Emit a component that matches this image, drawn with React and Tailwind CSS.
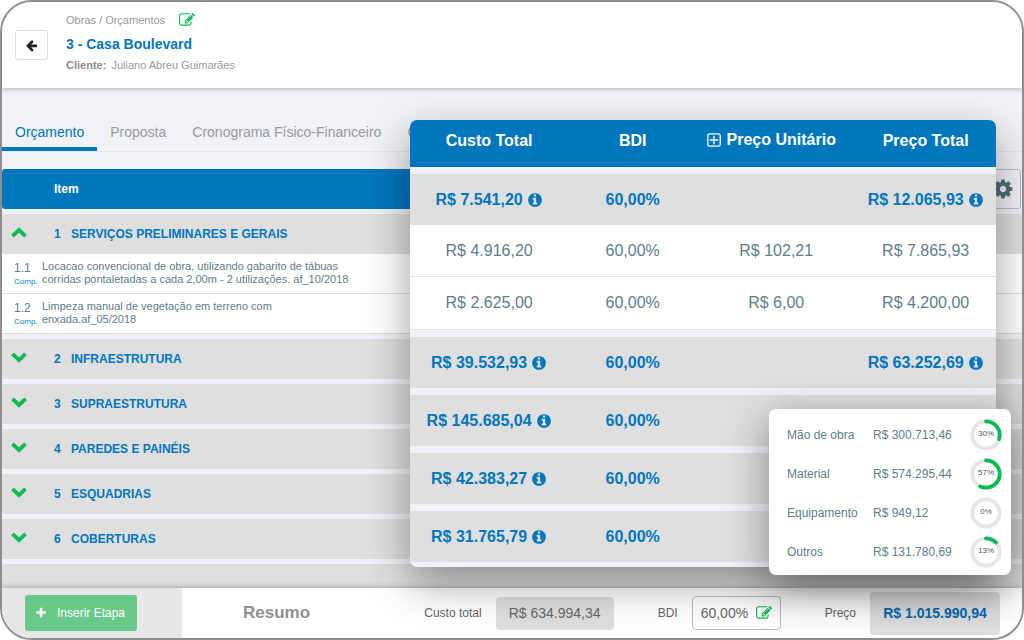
import { useState } from "react";

const TABS = ["Orçamento", "Proposta", "Cronograma Físico-Financeiro", "C"];

const STAGES = [
  {
    id: "1",
    name: "SERVIÇOS PRELIMINARES E GERAIS",
    open: true,
    items: [
      {
        id: "1.1",
        lines: [
          "Locacao convencional de obra, utilizando gabarito de tábuas",
          "corridas pontaletadas a cada 2,00m - 2 utilizações. af_10/2018",
        ],
      },
      {
        id: "1.2",
        lines: ["Limpeza manual de vegetação em terreno com", "enxada.af_05/2018"],
      },
    ],
  },
  { id: "2", name: "INFRAESTRUTURA" },
  { id: "3", name: "SUPRAESTRUTURA" },
  { id: "4", name: "PAREDES E PAINÉIS" },
  { id: "5", name: "ESQUADRIAS" },
  { id: "6", name: "COBERTURAS" },
];

const PRICES = [
  {
    cost: "R$ 7.541,20",
    total: "R$ 12.065,93",
    items: [
      { cost: "R$ 4.916,20", unit: "R$ 102,21", total: "R$ 7.865,93" },
      { cost: "R$ 2.625,00", unit: "R$ 6,00", total: "R$ 4.200,00" },
    ],
  },
  { cost: "R$ 39.532,93", total: "R$ 63.252,69" },
  { cost: "R$ 145.685,04" },
  { cost: "R$ 42.383,27" },
  { cost: "R$ 31.765,79" },
];

const BREAKDOWN = [
  { label: "Mão de obra", value: "R$ 300.713,46", percent: 30 },
  { label: "Material", value: "R$ 574.295,44", percent: 57 },
  { label: "Equipamento", value: "R$ 949,12", percent: 0 },
  { label: "Outros", value: "R$ 131.780,69", percent: 13 },
];

const ICONS = {
  edit: "M888 1184l116-116-152-152-116 116v56h96v96h56zm440-720q-16-16-33 1l-350 350q-17 17-1 33t33-1l350-350q17-17 1-33zm80 594v190q0 119-84.5 203.5t-203.5 84.5h-832q-119 0-203.5-84.5t-84.5-203.5v-832q0-119 84.5-203.5t203.5-84.5h832q63 0 117 25 15 7 18 23 3 17-9 29l-49 49q-14 14-32 8-23-6-45-6h-832q-66 0-113 47t-47 113v832q0 66 47 113t113 47h832q66 0 113-47t47-113v-126q0-13 9-22l64-64q15-15 35-7t20 29zm-96-738l288 288-672 672h-288v-288zm444 132l-92 92-288-288 92-92q28-28 68-28t68 28l152 152q28 28 28 68t-28 68z",
  back: "M1664 896v128q0 53-32.5 90.5t-84.5 37.5h-704l293 294q38 36 38 90t-38 90l-75 76q-37 37-90 37-52 0-91-37l-651-652q-37-37-37-90 0-52 37-91l651-650q38-38 91-38 52 0 90 38l75 74q38 38 38 91t-38 91l-293 293h704q52 0 84.5 37.5t32.5 90.5z",
  gear: "M1152 896q0-106-75-181t-181-75-181 75-75 181 75 181 181 75 181-75 75-181zm512-109v222q0 12-8 23t-20 13l-185 28q-19 54-39 91 35 50 107 138 10 12 10 25t-9 23q-27 37-99 108t-94 71q-12 0-26-9l-138-108q-44 23-91 38-16 136-29 186-7 28-36 28h-222q-14 0-24.5-8.5t-11.5-21.5l-28-184q-49-16-90-37l-141 107q-10 9-25 9-14 0-25-11-126-114-165-168-7-10-7-23 0-12 8-23 15-21 51-66.5t54-70.5q-27-50-41-99l-183-27q-13-2-21-12.5t-8-23.5v-222q0-12 8-23t19-13l186-28q14-46 39-92-40-57-107-138-10-12-10-24 0-10 9-23 26-36 98.5-107.5t94.5-71.5q13 0 26 10l138 107q44-23 91-38 16-136 29-186 7-28 36-28h222q14 0 24.5 8.5t11.5 21.5l28 184q49 16 90 37l142-107q9-9 24-9 13 0 25 10 129 119 165 170 7 8 7 22 0 12-8 23-15 21-51 66.5t-54 70.5q26 50 41 98l183 28q13 2 21 12.5t8 23.5z",
  info: "M1152 1376v-160q0-14-9-23t-23-9h-96v-512q0-14-9-23t-23-9h-320q-14 0-23 9t-9 23v160q0 14 9 23t23 9h96v320h-96q-14 0-23 9t-9 23v160q0 14 9 23t23 9h448q14 0 23-9t9-23zm-128-896v-160q0-14-9-23t-23-9h-192q-14 0-23 9t-9 23v160q0 14 9 23t23 9h192q14 0 23-9t9-23zm640 416q0 209-103 385.5t-279.5 279.5-385.5 103-385.5-103-279.5-279.5-103-385.5 103-385.5 279.5-279.5 385.5-103 385.5 103 279.5 279.5 103 385.5z",
  plus: "M1600 736v192q0 40-28 68t-68 28h-416v416q0 40-28 68t-68 28h-192q-40 0-68-28t-28-68v-416h-416q-40 0-68-28t-28-68v-192q0-40 28-68t68-28h416v-416q0-40 28-68t68-28h192q40 0 68 28t28 68v416h416q40 0 68 28t28 68z",
};

function Icon({ name, className }) {
  return (
    <svg viewBox="0 0 1792 1792" className={`shrink-0 fill-current ${className}`} aria-hidden="true">
      <path d={ICONS[name]} />
    </svg>
  );
}

function Chevron({ up }) {
  return (
    <svg viewBox="0 0 16 11" className="h-[11px] w-4" fill="none" stroke="#0aba52" strokeWidth="3.8" aria-hidden="true">
      <path d={up ? "M1.5 9.2 8 2.9 14.5 9.2" : "M1.5 1.8 8 8.1 14.5 1.8"} />
    </svg>
  );
}

function PlusSquare() {
  return (
    <svg viewBox="0 0 14 14" className="h-3.5 w-3.5" fill="none" stroke="currentColor" strokeWidth="1.3" aria-hidden="true">
      <rect x="0.8" y="0.8" width="12.4" height="12.4" rx="1.8" />
      <path d="M7 2.8v8.4M2.8 7h8.4" />
    </svg>
  );
}

function Ring({ percent }) {
  return (
    <div className="relative h-8 w-8">
      <svg viewBox="0 0 32 32" className="h-8 w-8 -rotate-90" fill="none" strokeWidth="3.8" aria-hidden="true">
        <circle cx="16" cy="16" r="13.7" stroke="#e6e6e6" />
        {percent > 0 && (
          <circle
            cx="16"
            cy="16"
            r="13.7"
            stroke="#0aba52"
            strokeLinecap="round"
            pathLength="100"
            strokeDasharray={`${percent} 100`}
          />
        )}
      </svg>
      <span className="absolute inset-0 flex items-center justify-center text-[8px] text-[#555]">{percent}%</span>
    </div>
  );
}

function Header() {
  return (
    <header className="z-10 flex h-[86px] shrink-0 items-center bg-white pb-[5px] pl-[13px] shadow-[0_1px_5px_rgba(0,0,0,0.28)]">
      <button
        type="button"
        aria-label="Voltar"
        className="mt-[5px] flex h-[30px] w-[33px] items-center justify-center rounded-[3px] border border-[#dedede] text-[#222]"
      >
        <Icon name="back" className="h-[13px] w-[13px]" />
      </button>
      <div className="ml-[18px]">
        <div className="flex h-5 items-center gap-3.5 text-[11px] text-[#999]">
          <nav>
            <a href="#obras">Obras</a> / <a href="#orcamentos">Orçamentos</a>
          </nav>
          <button type="button" aria-label="Editar obra" className="text-[#0aba52]">
            <Icon name="edit" className="h-4 w-4" />
          </button>
        </div>
        <h1 className="mt-1 text-sm leading-5 font-bold text-[#0076bd]">3 - Casa Boulevard</h1>
        <p className="mt-px text-[11px] leading-5 text-[#999]">
          <b className="mr-0.5 text-[#8c8c8c]">Cliente:</b> Juliano Abreu Guimarães
        </p>
      </div>
    </header>
  );
}

function Tabs() {
  const [active, setActive] = useState(TABS[0]);

  return (
    <nav className="mt-6 flex h-10 shrink-0 border-b border-[#e6e7ec] text-sm text-[#999]">
      {TABS.map((tab) => (
        <button
          key={tab}
          type="button"
          onClick={() => setActive(tab)}
          className={`border-b-4 px-[13px] pt-1 ${
            tab === active ? "border-[#0076bd] text-[#0076bd]" : "border-transparent"
          }`}
        >
          {tab}
        </button>
      ))}
    </nav>
  );
}

function StageRow({ stage, onToggle }) {
  return (
    <tr>
      <td className="pt-[5px]">
        <div className="flex h-10 items-center rounded-l-[3px] bg-[#dfdfdf] pl-[9px] text-xs font-bold text-[#0076bd]">
          <button type="button" aria-label={`Alternar etapa ${stage.id}`} onClick={onToggle} className="w-[43px] pb-1">
            <Chevron up={stage.open} />
          </button>
          <span className="w-[17px]">{stage.id}</span>
          <span>{stage.name}</span>
        </div>
      </td>
    </tr>
  );
}

function ItemRow({ item }) {
  return (
    <tr>
      <td className="h-10 border-b border-[#dcdcdc] bg-white">
        <div className="flex pl-3 text-[11px] leading-[13px] text-[#607d8b]">
          <div className="w-7 shrink-0">
            <div className="text-xs leading-4">{item.id}</div>
            <div className="text-[8px] leading-3 text-[#0088cc]">Comp.</div>
          </div>
          <p>
            {item.lines[0]}
            <br />
            {item.lines[1]}
          </p>
        </div>
      </td>
    </tr>
  );
}

function StagesTable() {
  const [stages, setStages] = useState(STAGES);

  function handleToggle(id) {
    setStages((prev) => prev.map((s) => (s.id === id ? { ...s, open: !s.open } : s)));
  }

  return (
    <div className="mt-[17px] min-h-0 flex-1 overflow-hidden">
      <table className="w-full border-separate border-spacing-0">
        <thead>
          <tr>
            <th className="text-left">
              <div className="flex h-10">
                <div className="flex flex-1 items-center rounded-[3px] bg-[#0076bd] pl-[52px] text-xs text-white">
                  Item
                </div>
                <button
                  type="button"
                  aria-label="Configurações"
                  className="mr-px flex w-9 items-center justify-center rounded-[3px] border border-[#bdbdbd] text-[#546e7a]"
                >
                  <Icon name="gear" className="h-[22px] w-[22px]" />
                </button>
              </div>
            </th>
          </tr>
        </thead>
        {stages.map((stage) => (
          <tbody key={stage.id}>
            <StageRow stage={stage} onToggle={() => handleToggle(stage.id)} />
            {stage.open && stage.items?.map((item) => <ItemRow key={item.id} item={item} />)}
          </tbody>
        ))}
        {/* next stage, cut by the footer */}
        <tbody>
          <tr>
            <td className="pt-[5px]">
              <div className="h-10 rounded-l-[3px] bg-[#dfdfdf]" />
            </td>
          </tr>
        </tbody>
      </table>
    </div>
  );
}

function InfoValue({ children }) {
  return (
    <span className="inline-flex items-center gap-1">
      {children}
      <Icon name="info" className="h-4 w-4" />
    </span>
  );
}

function PriceGroup({ group }) {
  return (
    <tbody>
      <tr className="font-bold text-[#0076bd]">
        {[group.cost, "60,00%", "", group.total].map((value, i) => (
          <td key={i} className="h-[58px] border-t-[7px] border-[#f1f2f7] bg-[#dfdfdf]">
            {value && i !== 1 ? <InfoValue>{value}</InfoValue> : value}
          </td>
        ))}
      </tr>
      {group.items?.map((item) => (
        <tr key={item.cost} className="h-[52px] text-[#607d8b] last:h-[53px]">
          {[item.cost, "60,00%", item.unit, item.total].map((value, i) => (
            <td key={i} className="border-b border-[#e2e3e6] bg-white">
              {value}
            </td>
          ))}
        </tr>
      ))}
    </tbody>
  );
}

function PricesCard() {
  return (
    <section className="absolute top-[118px] right-[26px] left-2/5 z-20 overflow-hidden rounded-[7px] bg-[#f1f2f7] pb-[5px] shadow-[0_16px_44px_rgba(0,0,0,0.38)]">
      <table className="w-full table-fixed border-separate border-spacing-0 text-center text-base">
        <thead className="bg-[#0076bd] text-white">
          <tr>
            <th className="h-[47px] w-[27%] pb-[5px]">Custo Total</th>
            <th className="w-[22%] pb-[5px]">BDI</th>
            <th className="w-[27%] pr-2.5 pb-[5px]">
              <button type="button" className="inline-flex items-center gap-1.5">
                <PlusSquare />
                Preço Unitário
              </button>
            </th>
            <th className="pb-[5px]">Preço Total</th>
          </tr>
        </thead>
        {PRICES.map((group) => (
          <PriceGroup key={group.cost} group={group} />
        ))}
      </table>
    </section>
  );
}

function BreakdownPopup() {
  return (
    <aside className="absolute top-[407px] right-[11px] z-30 rounded-[7px] bg-white pt-[6px] pr-[9px] pb-1 pl-[18px] shadow-[0_12px_44px_rgba(0,0,0,0.42)]">
      <table className="text-xs text-[#607d8b]">
        <tbody>
          {BREAKDOWN.map((row) => (
            <tr key={row.label} className="h-[39px]">
              <th className="w-[86px] text-left font-normal">{row.label}</th>
              <td className="w-[97px]">{row.value}</td>
              <td className="w-8">
                <Ring percent={row.percent} />
              </td>
            </tr>
          ))}
        </tbody>
      </table>
    </aside>
  );
}

function Footer() {
  return (
    <footer className="z-10 flex h-[50px] shrink-0 items-center bg-white text-xs text-[#666] shadow-[0_-1px_6px_rgba(0,0,0,0.25)]">
      <div className="flex h-full w-[180px] items-center bg-[#e7e7e7] pl-[23px]">
        <button
          type="button"
          className="flex h-9 w-28 items-center gap-2.5 rounded-[3px] bg-[#69c98a] pl-2.5 text-xs text-white"
        >
          <Icon name="plus" className="h-3 w-3" />
          Inserir Etapa
        </button>
      </div>
      <h2 className="pl-[61px] text-[17px] font-bold text-[#8f8f8f]">Resumo</h2>
      <div className="ml-auto flex items-center pr-[22px]">
        <span>Custo total</span>
        <span className="ml-3.5 flex h-[33px] w-[118px] items-center justify-center rounded bg-[#dedede] text-sm">
          R$ 634.994,34
        </span>
        <label htmlFor="bdi" className="ml-11">
          BDI
        </label>
        <div className="ml-3.5 flex h-[34px] w-[89px] items-center rounded border border-[#bbb] bg-white pl-2">
          <input id="bdi" type="text" defaultValue="60,00%" className="w-[55px] bg-transparent text-sm outline-none" />
          <button type="button" aria-label="Editar BDI" className="text-[#0aba52]">
            <Icon name="edit" className="h-4 w-4" />
          </button>
        </div>
        <span className="ml-11">Preço</span>
        <span className="ml-3.5 flex h-[43px] w-[130px] items-center justify-center rounded bg-[#dedede] text-sm font-bold text-[#0068b0]">
          R$ 1.015.990,94
        </span>
      </div>
    </footer>
  );
}

function App() {
  return (
    <div className="relative flex h-screen flex-col overflow-hidden rounded-[32px] border-2 border-[#8e8e8e] bg-[#f1f2f7] font-['Liberation_Sans',Arial,sans-serif]">
      <Header />
      <Tabs />
      <StagesTable />
      <Footer />
      <PricesCard />
      <BreakdownPopup />
    </div>
  );
}

export default App;
